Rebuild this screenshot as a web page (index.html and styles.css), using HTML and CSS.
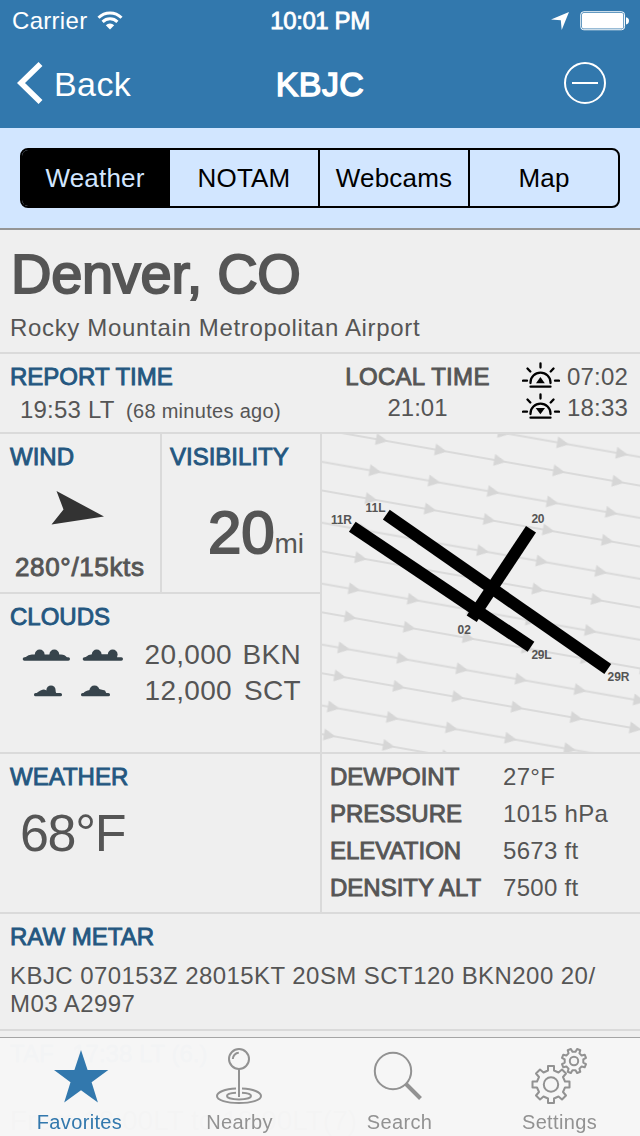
FILE: index.html
```html
<!DOCTYPE html>
<html lang="en">
<head>
    <meta charset="UTF-8">
    <meta name="viewport" content="width=device-width, initial-scale=1.0">
    <title>KBJC</title>
    <link rel="stylesheet" href="styles.css">
</head>
<body>
    <header>
        <div class="status-bar">
            <div class="carrier">
                <span>Carrier</span>
                <svg width="26" height="20" viewBox="0 0 26 20">
                    <path d="M1.500 6.700a16.300 16.300 0 0 1 23 0" fill="none" stroke="#fff" stroke-width="3"/>
                    <path d="M5.600 10.900a10.500 10.500 0 0 1 14.800 0" fill="none" stroke="#fff" stroke-width="3"/>
                    <path d="M8.800 14.200a6 6 0 0 1 8.400 0L13 18.500z" fill="#fff"/>
                </svg>
            </div>
            <div class="clock">10:01 PM</div>
            <div class="indicators">
                <svg width="18" height="18" viewBox="0 0 18 18"><path d="M18 0L10.7 18L9.8 8.3L0 7.6z" fill="#fff"/></svg>
                <svg width="50" height="20" viewBox="0 0 50 20">
                    <rect x=".75" y=".75" width="43.8" height="18" rx="3" fill="none" stroke="#fff" stroke-width="1"/>
                    <rect x="2" y="2" width="41.3" height="15.5" rx="1.5" fill="#fff"/>
                    <path d="M46 6.2q3 .6 3 3.6t-3 3.6z" fill="#fff"/>
                </svg>
            </div>
        </div>
        <nav class="nav-bar">
            <a class="back" href="#">
                <svg width="28" height="42" viewBox="0 0 28 42"><path d="M23.5 2L4 21L23.5 40" fill="none" stroke="#fff" stroke-width="5.6"/></svg>
                <span>Back</span>
            </a>
            <h1>KBJC</h1>
            <a class="remove" href="#">
                <svg width="44" height="44" viewBox="0 0 44 44" fill="none" stroke="#fff" stroke-width="2"><circle cx="22" cy="22" r="20"/><path d="M9 22h26"/></svg>
            </a>
        </nav>
    </header>

    <div class="segments">
        <div class="segment-control">
            <a class="segment active" href="#">Weather</a>
            <a class="segment" href="#">NOTAM</a>
            <a class="segment" href="#">Webcams</a>
            <a class="segment" href="#">Map</a>
        </div>
    </div>

    <main>
        <section class="station">
            <h2>Denver, CO</h2>
            <p>Rocky Mountain Metropolitan Airport</p>
        </section>

        <section class="times">
            <div class="report">
                <h3>REPORT TIME</h3>
                <p>19:53 LT <small>(68 minutes ago)</small></p>
            </div>
            <div class="local">
                <h3>LOCAL TIME</h3>
                <p>21:01</p>
            </div>
            <div class="sun">
                <div class="sun-row">
                    <svg width="38" height="28" viewBox="0 0 38 28">
                        <path d="M8.500 21v-.6a10 9.700 0 0 1 20 0v.6M8.500 24.700h20M1 18.700h4M33 18.700h4M18.500 1.500v4M5.500 6.500l2.800 3M31.500 6.500l-2.800 3" fill="none" stroke="#000" stroke-width="2.3" stroke-linecap="round"/>
                        <path d="M14 21.300L18.400 15L22.800 21.300z"/>
                    </svg>
                    <span>07:02</span>
                </div>
                <div class="sun-row">
                    <svg width="38" height="28" viewBox="0 0 38 28">
                        <path d="M8.500 21v-.6a10 9.700 0 0 1 20 0v.6M8.500 24.700h20M1 18.700h4M33 18.700h4M18.500 1.500v4M5.500 6.500l2.800 3M31.500 6.500l-2.800 3" fill="none" stroke="#000" stroke-width="2.3" stroke-linecap="round"/>
                        <path d="M13.700 15L18.400 21.300L23 15z"/>
                    </svg>
                    <span>18:33</span>
                </div>
            </div>
        </section>

        <section class="conditions">
            <div class="wind">
                <h3>WIND</h3>
                <svg width="54" height="36" viewBox="0 0 54 36"><path d="M5.5 1L53 26.5L.5 34.5L12.5 19.5z" fill="#333"/></svg>
                <p>280°/15kts</p>
            </div>
            <div class="visibility">
                <h3>VISIBILITY</h3>
                <p><b>20</b><span>mi</span></p>
            </div>
            <div class="clouds">
                <h3>CLOUDS</h3>
                <div class="cloud-row">
                    <svg width="122" height="14" viewBox="0 0 122 14" fill="#37444c">
                        <rect x="12.700" y="9.300" width="47.300" height="3.400" rx="1.700"/>
                        <path d="M15 9.500Q19 6 23 6.500H51Q55 6.500 57 9.500V10.500H15z"/>
                        <circle cx="29.700" cy="6.500" r="4.900"/>
                        <circle cx="44.300" cy="6.500" r="4.900"/>
                        <rect x="72.700" y="9.300" width="40.300" height="3.400" rx="1.700"/>
                        <path d="M75 9.500Q79 6 83 6.300H98L106 8L108 11H75z"/>
                        <circle cx="86.700" cy="6.500" r="4.900"/>
                        <circle cx="102.700" cy="6.500" r="4.900"/>
                    </svg>
                    <span class="altitude">20,000</span>
                    <span class="cover">BKN</span>
                </div>
                <div class="cloud-row">
                    <svg width="122" height="14" viewBox="0 0 122 14" fill="#37444c">
                        <rect x="24" y="9" width="28" height="3.300" rx="1.600"/>
                        <path d="M26 9.500Q31 5.500 34 5.500L37 6.500L45 6L47 11H26z"/>
                        <circle cx="41" cy="6" r="4.600"/>
                        <rect x="71" y="9" width="29" height="3.300" rx="1.600"/>
                        <path d="M73 9.500Q75 6.800 80 6L89 5L95 6.500L97 10.500H73z"/>
                        <circle cx="84.500" cy="6.500" r="5.100"/>
                    </svg>
                    <span class="altitude">12,000</span>
                    <span class="cover">SCT</span>
                </div>
            </div>
            <div class="runways">
                <svg width="318" height="318" viewBox="0 0 318 318">
                    <defs>
                        <pattern id="windLines" width="60" height="60" patternUnits="userSpaceOnUse" patternTransform="translate(27.7 -9.7) rotate(10)">
                            <path d="M0 10h60M0 41.8h60" stroke="#dadada" stroke-width="2"/>
                            <path d="M28.500 4L40.500 10L28.500 16zM27.500 35.800L39.500 41.800L27.500 47.800z" fill="#d6d6d6"/>
                        </pattern>
                    </defs>
                    <rect width="318" height="318" fill="url(#windLines)"/>
                    <g stroke="#000" stroke-width="12">
                        <path d="M30.300 92.700L209 212.800"/>
                        <path d="M64.300 80.700L285.800 235"/>
                        <path d="M209 95.300L149.700 184.700"/>
                    </g>
                    <g class="runway-labels">
                        <text x="9" y="90" textLength="21">11R</text>
                        <text x="43.500" y="78" textLength="20">11L</text>
                        <text x="209.500" y="89" textLength="13">20</text>
                        <text x="135.500" y="200" textLength="13.500">02</text>
                        <text x="209.500" y="225" textLength="20">29L</text>
                        <text x="285.500" y="247" textLength="22">29R</text>
                    </g>
                </svg>
            </div>
            <div class="temperature">
                <h3>WEATHER</h3>
                <p>68°F</p>
            </div>
            <dl class="details">
                <dt>DEWPOINT</dt><dd>27°F</dd>
                <dt>PRESSURE</dt><dd>1015 hPa</dd>
                <dt>ELEVATION</dt><dd>5673 ft</dd>
                <dt>DENSITY ALT</dt><dd>7500 ft</dd>
            </dl>
        </section>

        <section class="metar">
            <h3>RAW METAR</h3>
            <p>KBJC 070153Z 28015KT 20SM SCT120 BKN200 20/<br>M03 A2997</p>
        </section>

        <section class="taf">
            <h3>TAF <span>17:38 LT (6.)</span></h3>
            <p>From 18:00LT to 18:00LT(7)</p>
        </section>
    </main>

    <footer class="tab-bar">
        <a class="tab active" href="#">
            <svg width="60" height="60" viewBox="0 0 60 60"><path d="M31 3L37.600 23H58.300L41.600 35.300L47.900 55.500L31 43.300L14.200 55.500L20.500 35.300L4 23H24.400z" fill="#3278ad"/></svg>
            <span>Favorites</span>
        </a>
        <a class="tab" href="#">
            <svg width="60" height="60" viewBox="0 0 60 60" fill="none" stroke="#929292" stroke-width="2">
                <circle cx="29" cy="12" r="10"/>
                <path d="M22.800 12a6.200 6.200 0 0 1 6-6.200M29 22v28"/>
                <path d="M26 41.600C15 42 7 45 7 49c0 4.300 9.800 7 22 7s22-2.700 22-7c0-4-8-7-19-7.400"/>
                <path d="M26 45.800c-5.500.3-9 1.500-9 3.300 0 2 5.400 3.300 12 3.300s12-1.300 12-3.300c0-1.800-3.500-3-9-3.300"/>
            </svg>
            <span>Nearby</span>
        </a>
        <a class="tab" href="#">
            <svg width="60" height="60" viewBox="0 0 60 60" fill="none" stroke="#929292">
                <circle cx="23" cy="24" r="18.200" stroke-width="2"/>
                <path d="M36 37L50.500 51.500" stroke-width="4"/>
            </svg>
            <span>Search</span>
        </a>
        <a class="tab" href="#">
            <svg width="60" height="60" viewBox="0 0 60 60" fill="none" stroke="#929292" stroke-width="2" stroke-linejoin="round">
                <path d="M18 23.500v-4.500h6v4.500l4.500 2 3.500-3 4 4-3 3.500 2 4.500h4.500v6h-4.500l-2 4.500 3 3.500-4 4-3.500-3-4.500 2v4.500h-6v-4.500l-4.500-2-3.500 3-4-4 3-3.500-2-4.500H2.500v-6h4.500l2-4.500-3-3.500 4-4 3.500 3z"/>
                <circle cx="21" cy="37.500" r="7.200"/>
                <g transform="translate(44 14)">
                    <path d="M9.300 1.550L12 3.100L10.700 6.300L7.650 5.450L5.450 7.650L6.300 10.700L3.100 12L1.550 9.300H-1.550L-3.100 12L-6.300 10.700L-5.450 7.650L-7.650 5.450L-10.700 6.300L-12 3.100L-9.300 1.550V-1.550L-12 -3.100L-10.700 -6.300L-7.650 -5.450L-5.450 -7.650L-6.300 -10.700L-3.100 -12L-1.550 -9.300H1.550L3.100 -12L6.300 -10.700L5.450 -7.650L7.650 -5.450L10.700 -6.300L12 -3.100L9.300 -1.550z"/>
                    <circle r="4.200"/>
                </g>
            </svg>
            <span>Settings</span>
        </a>
    </footer>
</body>
</html>
```
FILE: styles.css
```css
* {
    box-sizing: border-box;
}
body {
    font-family: "Liberation Sans", Arial, sans-serif;
    margin: 0;
    height: 1136px;
    overflow: hidden;
    background-color: #efefef;
    color: #555;
    font-size: 24px;
    line-height: 28px;
}
h1, h2, h3, p, dl, dd {
    margin: 0;
}
h1, h2, h3, dt, b {
    font-weight: normal;
    -webkit-text-stroke: 0.9px currentColor;
}
a {
    color: inherit;
    text-decoration: none;
}
svg {
    display: block;
}
header {
    height: 128px;
    background-color: #3278ad;
    color: #fff;
}
.status-bar {
    display: grid;
    grid-template-columns: 1fr auto 1fr;
    height: 40px;
    padding: 2px 10px 0;
    align-items: center;
}
.carrier {
    display: flex;
    gap: 10px;
    padding-left: 2px;
    letter-spacing: 0.3px;
}
.carrier svg {
    margin-top: 4px;
}
.clock {
    letter-spacing: -0.4px;
    -webkit-text-stroke: 0.8px #fff;
}
.indicators {
    display: flex;
    justify-content: flex-end;
    gap: 11px;
    align-items: center;
}
.nav-bar {
    display: grid;
    grid-template-columns: 1fr auto 1fr;
    height: 88px;
    padding: 0 33px 2px;
    align-items: center;
}
.back {
    display: flex;
    align-items: center;
    gap: 9px;
    margin-left: -16px;
    font-size: 34px;
    letter-spacing: 0.4px;
}
.back span, .nav-bar h1 {
    margin-top: 1px;
}
.nav-bar h1 {
    font-size: 34px;
    letter-spacing: 0.4px;
    -webkit-text-stroke-width: 1.4px;
}
.remove {
    justify-self: end;
}
.segments {
    height: 102px;
    padding: 20px;
    background-color: #d2e6ff;
    border-bottom: 2px solid #959595;
}
.segment-control {
    display: grid;
    grid-template-columns: 146px repeat(3, 150px);
    height: 60px;
    border: 2px solid #000;
    border-radius: 8px;
    overflow: hidden;
    color: #000;
    font-size: 26px;
    letter-spacing: 0.2px;
}
.segment {
    border-left: 2px solid #000;
    text-align: center;
    line-height: 56px;
}
.segment.active {
    border-left: none;
    background-color: #000;
    color: #d2e6ff;
}
.station {
    height: 124px;
    padding: 16px 10px 0;
    border-bottom: 2px solid #dadada;
}
.station h2 {
    margin-left: 1px;
    font-size: 56px;
    line-height: 56px;
    letter-spacing: -0.3px;
    -webkit-text-stroke-width: 2px;
}
.station p {
    margin-top: 12px;
    letter-spacing: 0.67px;
}
.times {
    display: grid;
    grid-template-columns: 320px 195px 1fr;
    height: 80px;
    border-bottom: 2px solid #dadada;
}
h3 {
    font-size: 24px;
    line-height: 28px;
    color: #245780;
}
.report {
    padding: 9px 10px 0;
}
.report p {
    margin-top: 5px;
    padding-left: 10px;
    letter-spacing: 0.2px;
}
.report small {
    margin-left: 5px;
    font-size: 20px;
    letter-spacing: 0.3px;
}
.local {
    padding-top: 9px;
    text-align: center;
}
.local h3 {
    color: #555;
    letter-spacing: 0.3px;
}
.local p {
    margin-top: 3px;
}
.sun {
    padding: 8px 0 0 7px;
}
.sun-row {
    display: flex;
    gap: 7px;
    height: 31px;
}
.sun-row span {
    line-height: 30px;
    letter-spacing: 0.2px;
}
.conditions {
    display: grid;
    grid-template-columns: 160px 160px 320px;
    grid-template-rows: 160px 160px 160px;
}
.conditions > * {
    padding: 9px 10px 0;
    border-bottom: 2px solid #dadada;
}
.wind svg {
    margin: 19px 0 0 41px;
}
.wind p {
    margin: 27px 0 0 5px;
    font-size: 26px;
    letter-spacing: 0.65px;
    -webkit-text-stroke: 0.9px #555;
    white-space: nowrap;
}
.visibility {
    border-left: 2px solid #dadada;
}
.conditions .visibility {
    padding-left: 8px;
}
.visibility p {
    margin-top: 32px;
    padding-right: 6px;
    text-align: right;
    line-height: 60px;
}
.visibility b {
    font-size: 60px;
    letter-spacing: -0.2px;
    -webkit-text-stroke-width: 2px;
}
.visibility span {
    font-size: 28px;
}
.clouds {
    grid-column: 1 / 3;
    grid-row: 2;
}
.cloud-row {
    display: grid;
    grid-template-columns: 122px 100px 69px;
    height: 36px;
    align-items: center;
    font-size: 28px;
    line-height: 36px;
    letter-spacing: 0.3px;
}
.cloud-row .altitude, .cloud-row .cover {
    text-align: right;
}
.clouds h3 {
    margin-bottom: 6px;
}
.conditions .runways {
    grid-column: 3;
    grid-row: 1 / 3;
    padding: 0;
    border-left: 2px solid #dadada;
}
.runway-labels {
    font-size: 12px;
    font-weight: bold;
    fill: #555;
}
.temperature {
    grid-column: 1 / 3;
}
.temperature p {
    padding: 16px 0 0 10px;
    font-size: 52px;
    line-height: 52px;
    letter-spacing: -1.3px;
}
.details {
    display: grid;
    grid-template-columns: 173px 1fr;
    grid-auto-rows: 37px;
    border-left: 2px solid #dadada;
}
.conditions .details {
    padding-left: 8px;
}
.details dd {
    letter-spacing: 0.3px;
}
.metar {
    height: 117px;
    padding: 9px 10px 0;
    border-bottom: 2px solid #dadada;
}
.metar p {
    margin-top: 11px;
    letter-spacing: 0.44px;
}
.taf {
    padding: 9px 10px 0;
    white-space: nowrap;
}
.taf h3 span {
    margin-left: 12px;
}
.taf p {
    margin-top: 39px;
    font-size: 28px;
}
.tab-bar {
    position: fixed;
    left: 0;
    right: 0;
    bottom: 0;
    display: grid;
    grid-template-columns: repeat(4, 160px);
    height: 99px;
    border-top: 1px solid #a5a5a5;
    background-color: rgba(246, 246, 246, 0.988);
}
.tab {
    display: flex;
    flex-direction: column;
    align-items: center;
    padding-top: 9px;
    color: #929292;
    font-size: 20px;
    line-height: 24px;
    letter-spacing: 0.35px;
}
.tab span {
    margin: 3px 1px 0 0;
}
.tab.active {
    color: #3278ad;
}
```
